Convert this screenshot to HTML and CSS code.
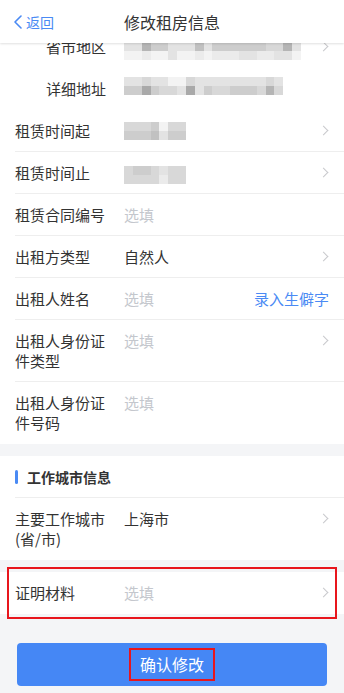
FILE: index.html
```html
<!DOCTYPE html>
<html lang="zh-CN">
<head>
<meta charset="utf-8">
<title>修改租房信息</title>
<link rel="stylesheet" href="styles.css">
</head>
<body>
<div class="page">
  <header class="nav">
    <a class="back">
      <svg class="back-icon" width="10" height="14" viewBox="0 0 10 14"><polyline points="8,1 2,7 8,13" fill="none" stroke="#4a8af4" stroke-width="1.6" stroke-linecap="round" stroke-linejoin="round"/></svg>
      <span>返回</span>
    </a>
    <h1 class="title">修改租房信息</h1>
    <span></span>
  </header>
  <main class="scroll">
    <div class="inner">
      <section class="card">
        <div class="row sub">
          <div class="label">省市地区</div>
          <div class="value">
            <div class="blur m5">
              <div class="br"><i class="c"></i><i class="c"></i><i class="g"></i><i class="e"></i><i class="e"></i><i class="c"></i><i class="c"></i><i class="c"></i><i class="f"></i><i class="c"></i><i class="e"></i><i class="e"></i><i class="e"></i><i class="e"></i><i class="e"></i><i class="e"></i><i class="d"></i><i class="d"></i><i class="g"></i><i class="c"></i></div>
              <div class="br"><i class="a"></i><i class="a"></i><i class="b"></i><i class="a"></i><i class="a"></i><i class="c"></i><i class="a"></i><i class="a"></i><i class="b"></i><i class="a"></i><i class="b"></i><i class="b"></i><i class="b"></i><i class="c"></i><i class="c"></i><i class="b"></i><i class="b"></i><i class="c"></i><i class="c"></i><i class="a"></i></div>
            </div>
          </div>
          <span class="chev"></span>
        </div>
        <div class="row sub">
          <div class="label">详细地址</div>
          <div class="value">
            <div class="blur mneg2">
              <div class="br"><i class="c"></i><i class="c"></i><i class="d"></i><i class="c"></i><i class="c"></i><i class="a"></i><i class="a"></i><i class="d"></i><i class="c"></i><i class="c"></i><i class="c"></i><i class="c"></i><i class="c"></i><i class="c"></i><i class="c"></i><i class="c"></i><i class="d"></i><i class="c"></i></div>
              <div class="br"><i class="e"></i><i class="e"></i><i class="h"></i><i class="e"></i><i class="d"></i><i class="d"></i><i class="c"></i><i class="h"></i><i class="c"></i><i class="e"></i><i class="d"></i><i class="d"></i><i class="e"></i><i class="e"></i><i class="e"></i><i class="d"></i><i class="g"></i><i class="d"></i></div>
            </div>
          </div>
        </div>
        <div class="row">
          <div class="label">租赁时间起</div>
          <div class="value">
            <div class="blur m1">
              <div class="br"><i class="d"></i><i class="d"></i><i class="d"></i><i class="e"></i><i class="a"></i><i class="d"></i><i class="d"></i></div>
              <div class="br"><i class="e"></i><i class="e"></i><i class="e"></i><i class="f"></i><i class="c"></i><i class="e"></i><i class="e"></i></div>
            </div>
          </div>
          <span class="chev"></span>
        </div>
        <div class="row">
          <div class="label">租赁时间止</div>
          <div class="value">
            <div class="blur m3">
              <div class="br"><i class="d"></i><i class="e"></i><i class="e"></i><i class="d"></i><i class="c"></i><i class="d"></i><i class="d"></i></div>
              <div class="br"><i class="d"></i><i class="d"></i><i class="d"></i><i class="d"></i><i class="b"></i><i class="d"></i><i class="d"></i></div>
            </div>
          </div>
          <span class="chev"></span>
        </div>
        <div class="row">
          <div class="label">租赁合同编号</div>
          <div class="value placeholder">选填</div>
        </div>
        <div class="row">
          <div class="label">出租方类型</div>
          <div class="value">自然人</div>
          <span class="chev"></span>
        </div>
        <div class="row">
          <div class="label">出租人姓名</div>
          <div class="value placeholder">选填</div>
          <a class="link">录入生僻字</a>
        </div>
        <div class="row">
          <div class="label">出租人身份证件类型</div>
          <div class="value placeholder">选填</div>
          <span class="chev"></span>
        </div>
        <div class="row last">
          <div class="label">出租人身份证件号码</div>
          <div class="value placeholder">选填</div>
        </div>
      </section>

      <section class="card">
        <div class="row section-title">
          <span class="bar"></span>
          <span>工作城市信息</span>
        </div>
        <div class="row last">
          <div class="label">主要工作城市(省/市)</div>
          <div class="value">上海市</div>
          <span class="chev"></span>
        </div>
      </section>

      <div class="marked">
        <section class="card">
          <div class="row last">
            <div class="label">证明材料</div>
            <div class="value placeholder">选填</div>
            <span class="chev"></span>
          </div>
        </section>
      </div>

      <div class="actions">
        <button class="submit"><span class="submit-text">确认修改</span></button>
      </div>
    </div>
  </main>
</div>
</body>
</html>
```
FILE: styles.css
```css
* { box-sizing: border-box; }
html, body {
  margin: 0;
  padding: 0;
}
body {
  width: 344px;
  height: 693px;
  overflow: hidden;
  background: #f4f5f7;
  font-family: "Noto Sans CJK SC", "Noto Sans", sans-serif;
  color: #333;
}
.page {
  display: flex;
  flex-direction: column;
  height: 693px;
}
.nav {
  position: relative;
  z-index: 2;
  flex: 0 0 43px;
  height: 43px;
  background: #fff;
  box-shadow: 0 1px 2px rgba(0, 0, 0, 0.12);
  display: grid;
  grid-template-columns: 1fr auto 1fr;
  align-items: center;
}
.back {
  display: flex;
  align-items: center;
  padding-left: 13px;
  color: #4a8af4;
  font-size: 14px;
  line-height: 20px;
}
.back-icon {
  margin-right: 3px;
}
.title {
  margin: 0;
  font-size: 16px;
  font-weight: 400;
  line-height: 22px;
  color: #333;
}
.scroll {
  flex: 1;
  overflow: hidden;
}
.inner {
  margin-top: -17px;
}
.card {
  background: #fff;
  margin-bottom: 12px;
}
.row {
  display: flex;
  align-items: flex-start;
  margin-left: 15px;
  padding: 11px 15px 10px 0;
  border-bottom: 1px solid #eeeeee;
  font-size: 15px;
  line-height: 20px;
}
.row.sub {
  border-bottom-color: transparent;
}
.row.last {
  border-bottom: none;
  padding-bottom: 11px;
}
.label {
  flex: 0 0 94px;
  width: 94px;
  margin-right: 15px;
  color: #333;
}
.row.sub .label {
  flex-basis: 94px;
  padding-left: 31px;
}
.value {
  flex: 1;
  height: 20px;
  color: #333;
}
.row .label + .value {
  min-width: 0;
}
.placeholder {
  color: #c4c7cd;
}
.link {
  color: #4a8af4;
  white-space: nowrap;
}
.chev {
  flex: 0 0 auto;
  width: 7px;
  height: 7px;
  margin-top: 6px;
  margin-right: 2px;
  border-top: 1.3px solid #c8c9cc;
  border-right: 1.3px solid #c8c9cc;
  transform: rotate(45deg);
}
.blur {
  display: flex;
  flex-direction: column;
  filter: blur(0.6px);
}
.blur.m5 { margin-top: 5px; }
.blur.mneg2 { margin-top: -2px; }
.blur.m1 { margin-top: 1px; }
.blur.m3 { margin-top: 3px; }
.br {
  display: flex;
}
.br i {
  display: block;
  width: 8.85px;
  height: 9px;
}
.br .a { background: #f3f3f3; }
.br .b { background: #ebebeb; }
.br .c { background: #e3e3e3; }
.br .d { background: #d8d8d8; }
.br .e { background: #cdcdcd; }
.br .f { background: #c1c1c1; }
.br .g { background: #b5b5b5; }
.br .h { background: #a9a9a9; }

.section-title {
  align-items: center;
  font-size: 14px;
  font-weight: 600;
  color: #333;
}
.bar {
  width: 3px;
  height: 14px;
  border-radius: 2px;
  background: #4a8af4;
  margin-right: 9px;
}
.marked {
  position: relative;
}
.marked .card {
  margin-bottom: 0;
}
.marked::after {
  content: "";
  position: absolute;
  top: -5px;
  bottom: -5px;
  left: 7px;
  right: 7px;
  border: 2px solid #e8161d;
  pointer-events: none;
}
.actions {
  padding: 29px 17px 0;
}
.submit {
  display: flex;
  align-items: center;
  justify-content: center;
  width: 100%;
  height: 43px;
  border: none;
  border-radius: 4px;
  background: #4587f5;
  color: #fff;
  font-family: "Noto Sans CJK SC", "Noto Sans", sans-serif;
  font-size: 16px;
  padding: 0;
}
.submit-text {
  display: inline-block;
  padding: 4px 8.5px;
  line-height: 21px;
  border: 2px solid #e8161d;
}
```
